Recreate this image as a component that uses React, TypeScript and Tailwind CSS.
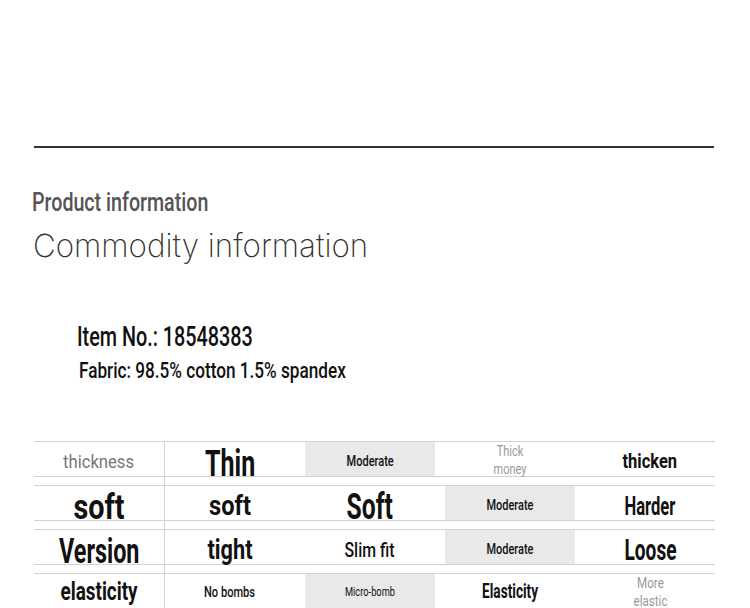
import React, { useLayoutEffect, useRef, useState } from "react";

const roboto = { fontFamily: "Roboto, 'Liberation Sans', sans-serif" };

function Fit({
  w,
  className,
  origin = "center",
  children,
}: {
  w: number;
  className?: string;
  origin?: string;
  children: React.ReactNode;
}) {
  const ref = useRef<HTMLSpanElement>(null);
  const [s, setS] = useState(0.75);
  useLayoutEffect(() => {
    if (ref.current) {
      const nat = ref.current.offsetWidth;
      if (nat) setS(w / nat);
    }
  }, [w]);
  return (
    <span
      ref={ref}
      className={"inline-block whitespace-nowrap " + (className || "")}
      style={{ transform: `scaleX(${s})`, transformOrigin: origin }}
    >
      {children}
    </span>
  );
}

type Cell = { lines: string[]; size: string; w: number; tone?: string; gray?: boolean; pt?: string };
type Row = { label: string; size: string; w: number; tone: string; pt: string; cells: Cell[] };

const rows: Row[] = [
  {
    label: "thickness",
    size: "text-[19px] font-normal",
    w: 71,
    tone: "text-[#777]",
    pt: "pt-[5px]",
    cells: [
      { lines: ["Thin"], size: "text-[37px] font-bold", w: 50, pt: "pt-[8px]" },
      { lines: ["Moderate"], size: "text-[15px] font-medium", w: 47, gray: true, pt: "pt-[4px]" },
      { lines: ["Thick", "money"], size: "text-[14px] font-normal leading-[18px]", w: 33, tone: "text-[#999]", pt: "pt-[2px]" },
      { lines: ["thicken"], size: "text-[21px] font-bold", w: 55, pt: "pt-[5px]" },
    ],
  },
  {
    label: "soft",
    size: "text-[35px] font-bold",
    w: 51,
    tone: "text-[#111]",
    pt: "pt-[8px]",
    cells: [
      { lines: ["soft"], size: "text-[27px] font-bold", w: 42, pt: "pt-[6px]" },
      { lines: ["Soft"], size: "text-[37px] font-bold", w: 46, pt: "pt-[6px]" },
      { lines: ["Moderate"], size: "text-[14px] font-medium", w: 47, gray: true, pt: "pt-[4px]" },
      { lines: ["Harder"], size: "text-[26px] font-bold", w: 51, pt: "pt-[5px]" },
    ],
  },
  {
    label: "Version",
    size: "text-[35px] font-bold",
    w: 80,
    tone: "text-[#111]",
    pt: "pt-[8px]",
    cells: [
      { lines: ["tight"], size: "text-[27px] font-bold", w: 45, pt: "pt-[6px]" },
      { lines: ["Slim fit"], size: "text-[20px] font-medium", w: 50, pt: "pt-[5px]" },
      { lines: ["Moderate"], size: "text-[14px] font-medium", w: 47, gray: true, pt: "pt-[4px]" },
      { lines: ["Loose"], size: "text-[29px] font-bold", w: 52, pt: "pt-[7px]" },
    ],
  },
  {
    label: "elasticity",
    size: "text-[25px] font-bold",
    w: 77,
    tone: "text-[#111]",
    pt: "pt-[1px]",
    cells: [
      { lines: ["No bombs"], size: "text-[15px] font-medium", w: 51, pt: "pt-[2px]" },
      { lines: ["Micro-bomb"], size: "text-[13px] font-normal", w: 50, gray: true, pt: "pt-0" },
      { lines: ["Elasticity"], size: "text-[20px] font-bold", w: 56, pt: "pt-0" },
      { lines: ["More", "elastic"], size: "text-[14px] font-normal leading-[18px]", w: 34, tone: "text-[#999]", pt: "pt-[1px]" },
    ],
  },
];

export default function App() {
  return (
    <div className="w-[750px] h-[608px] overflow-hidden bg-white flex flex-col" style={roboto}>
      <div className="h-[146px] shrink-0" />
      <div className="mx-[34px] w-[680px] h-[2px] bg-[#333] shrink-0" />
      <div className="pl-[32px] mt-[40px] text-[25px] leading-[30px] text-[#555] font-medium">
        <Fit w={176} origin="left">Product information</Fit>
      </div>
      <div
        className="pl-[33px] mt-[10px] text-[32px] leading-[36px] text-[#333] font-extralight"
        style={{ fontFamily: "Inter, sans-serif" }}
      >
        <Fit w={335} origin="left">Commodity information</Fit>
      </div>
      <div className="pl-[77px] mt-[57px] text-[28px] leading-[32px] text-[#111] font-medium">
        <Fit w={176} origin="left">Item No.: 18548383</Fit>
      </div>
      <div className="pl-[79px] mt-[5px] text-[22px] leading-[26px] text-[#111] font-medium">
        <Fit w={267} origin="left">Fabric: 98.5% cotton 1.5% spandex</Fit>
      </div>
      <div className="mt-[57px] ml-[34px] w-[681px] flex flex-col">
        {rows.map((r, i) => (
          <div key={i} className="h-[44px] shrink-0 grid grid-cols-[130px_1px_1fr] grid-rows-[44px]">
            <div className={"h-[36px] border-y border-[#d2d2d2] flex items-center justify-center " + r.pt}>
              <Fit w={r.w} className={"leading-none " + r.size + " " + r.tone}>
                {r.label}
              </Fit>
            </div>
            <div className="bg-[#d2d2d2]" />
            <div className="h-[36px] border-y border-[#d2d2d2] grid grid-cols-4 grid-rows-[34px] gap-x-[10px]">
              {r.cells.map((c, j) => (
                <div
                  key={j}
                  className={
                    "min-h-0 flex flex-col items-center justify-center text-center " +
                    (c.pt || "") +
                    " " +
                    (c.gray ? "bg-[#e9e9e9]" : "")
                  }
                >
                  <Fit w={c.w} className={(c.lines.length > 1 ? "" : "leading-none ") + c.size + " " + (c.tone || "text-[#111]")}>
                    {c.lines.map((l, k) => (
                      <React.Fragment key={k}>
                        {k > 0 && <br />}
                        {l}
                      </React.Fragment>
                    ))}
                  </Fit>
                </div>
              ))}
            </div>
          </div>
        ))}
      </div>
    </div>
  );
}
